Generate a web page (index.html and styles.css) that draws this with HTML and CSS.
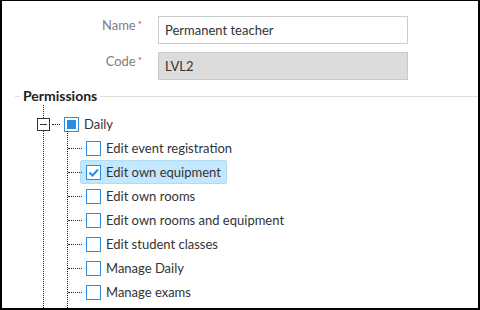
FILE: index.html
```html
<!DOCTYPE html>
<html>
<head>
<meta charset="utf-8">
<link rel="stylesheet" href="styles.css">
</head>
<body>
<div class="window">
  <div class="form">
    <div class="field">
      <label class="field-label">Name<span class="req">*</span></label>
      <input class="field-input" type="text" value="Permanent teacher">
    </div>
    <div class="field">
      <label class="field-label">Code<span class="req">*</span></label>
      <input class="field-input disabled" type="text" value="LVL2" readonly>
    </div>
  </div>
  <div class="section-head"><span class="section-title">Permissions</span></div>
  <ul class="tree">
    <li class="root">
      <div class="root-row">
        <span class="expander"><span class="minus"></span></span>
        <span class="hdots"></span>
        <span class="cb partial"><span class="fill"></span></span>
        <span class="label">Daily</span>
      </div>
      <ul class="children">
        <li class="child"><div class="item"><span class="cb"></span><span class="label">Edit event registration</span></div></li>
        <li class="child"><div class="item selected"><span class="cb checked"><svg width="13" height="13" viewBox="0 0 13 13"><polyline points="2.5,6.5 5.5,9.5 11,3.5" fill="none" stroke="#2a8ee0" stroke-width="2"/></svg></span><span class="label">Edit own equipment</span></div></li>
        <li class="child"><div class="item"><span class="cb"></span><span class="label">Edit own rooms</span></div></li>
        <li class="child"><div class="item"><span class="cb"></span><span class="label">Edit own rooms and equipment</span></div></li>
        <li class="child"><div class="item"><span class="cb"></span><span class="label">Edit student classes</span></div></li>
        <li class="child"><div class="item"><span class="cb"></span><span class="label">Manage Daily</span></div></li>
        <li class="child"><div class="item"><span class="cb"></span><span class="label">Manage exams</span></div></li>
      </ul>
    </li>
  </ul>
</div>
</body>
</html>
```

FILE: styles.css
```css
* { box-sizing: border-box; }
html, body { margin: 0; padding: 0; background: #fff; }
body { font-family: Lato, "Open Sans", sans-serif; font-size: 13px; color: #333; }

.window {
  width: 480px;
  height: 310px;
  border: 2px solid #000;
  border-top-width: 1px;
  overflow: hidden;
  background: #fff;
}

.form {
  padding-top: 15px;
  display: flex;
  flex-direction: column;
  gap: 8px;
}
.field {
  display: flex;
  align-items: flex-start;
  gap: 16px;
}
.field-label {
  width: 140px;
  text-align: right;
  color: #808080;
  line-height: 18px;
  padding-top: 0;
}
.req {
  color: #e5322d;
  font-size: 10px;
  vertical-align: top;
  line-height: 12px;
  margin-left: 2px;
  position: relative;
  top: 2px;
}
.field-input {
  width: 250px;
  height: 28px;
  border: 1px solid #ccc;
  padding: 0 6px;
  font-family: Lato, "Open Sans", sans-serif;
  font-size: 13px;
  color: #333;
  background: #fff;
  outline: none;
  margin: 0;
}
.field-input.disabled {
  background: #dcdcdc;
  border-color: #c8c8c8;
}

.section-head {
  display: flex;
  align-items: center;
  margin: 7px 0 0 13px;
  height: 18px;
}
.section-head::before {
  content: "";
  width: 5px;
  border-top: 1px solid #ddd;
}
.section-head::after {
  content: "";
  flex: 1;
  border-top: 1px solid #ddd;
}
.section-title {
  font-weight: bold;
  font-size: 14px;
  color: #222;
  padding: 0 3px 0 3px;
  line-height: 18px;
}

.tree {
  list-style: none;
  margin: 0;
  padding: 7px 0 0 35px;
}
.root {
  position: relative;
}
.root::before {
  content: "";
  position: absolute;
  left: 6px;
  top: -7px;
  bottom: -40px;
  border-left: 1px dotted #222;
}
.root-row {
  display: flex;
  align-items: center;
  height: 24px;
  position: relative;
}
.expander {
  width: 13px;
  height: 13px;
  border: 1px solid #333;
  background: #fff;
  display: flex;
  align-items: center;
  justify-content: center;
  position: relative;
}
.minus {
  width: 7px;
  border-top: 1px solid #333;
}
.hdots {
  width: 8px;
  margin: 0 4px 0 2px;
  border-top: 1px dotted #222;
}
.cb {
  width: 15px;
  height: 15px;
  border: 1px solid #2a8ee0;
  background: #fff;
  flex: none;
  display: flex;
  align-items: center;
  justify-content: center;
}
.cb .fill {
  width: 9px;
  height: 9px;
  background: #2a8ee0;
}
.label {
  margin-left: 5px;
  white-space: nowrap;
}

.children {
  list-style: none;
  margin: 0 0 0 25px;
  padding: 0;
  position: relative;
}
.children::before {
  content: "";
  position: absolute;
  left: 5px;
  top: -5px;
  bottom: -40px;
  border-left: 1px dotted #222;
}
.child {
  height: 24px;
  padding-left: 18px;
  display: flex;
  align-items: center;
  position: relative;
}
.child::before {
  content: "";
  position: absolute;
  left: 6px;
  top: 12px;
  width: 14px;
  border-top: 1px dotted #222;
}
.item {
  display: flex;
  align-items: center;
  height: 24px;
  padding: 0 5px;
  border: 1px solid transparent;
  border-radius: 2px;
}
.item.selected {
  background: #c3e8fd;
  border-color: #b1dcf5;
}
```
